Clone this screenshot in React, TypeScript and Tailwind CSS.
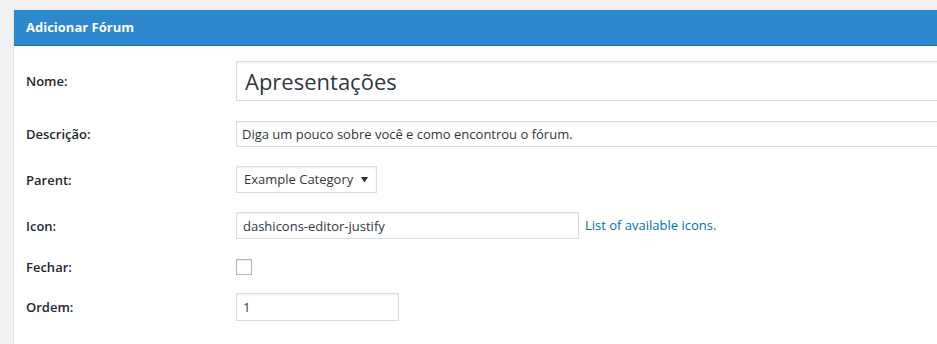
import React from 'react';

const font = { fontFamily: '"Open Sans", "Noto Sans", sans-serif' };

function Row({ label, top, children }: { label: string; top: string; children: React.ReactNode }) {
  return (
    <div className={`flex items-center ${top}`}>
      <div className="w-[222px] shrink-0 pl-3 text-[13px] leading-[16px] font-semibold text-[#23282d]">{label}</div>
      <div className="flex items-center flex-1 min-w-0">{children}</div>
    </div>
  );
}

const inputCls =
  'border border-[#ddd] bg-white shadow-[inset_0_1px_2px_rgba(0,0,0,0.07)] text-[#32373c] outline-none';

export default function App() {
  return (
    <div className="w-[937px] h-[344px] overflow-hidden bg-[#f1f1f1] pt-[10px] pl-[13px]" style={font}>
      <div className="w-[940px] h-[340px] bg-white border-l border-[#e5e5e5]">
        <div className="h-[36px] bg-[#2d88cd] border-b border-[#1f6cb0] flex items-center pl-3">
          <span className="text-[13px] font-bold text-white">Adicionar Fórum</span>
        </div>

        <Row label="Nome:" top="mt-[15px]">
          <input
            readOnly
            value="Apresentações"
            className={`${inputCls} w-full h-[40px] px-[8px] text-[22px]`}
          />
        </Row>

        <Row label="Descrição:" top="mt-[20px]">
          <input
            readOnly
            value="Diga um pouco sobre você e como encontrou o fórum."
            className={`${inputCls} w-full h-[26px] px-[5px] text-[13px]`}
          />
        </Row>

        <Row label="Parent:" top="mt-[19px]">
          <div className={`${inputCls} w-[141px] h-[27px] flex items-center justify-between pl-[7px] pr-[8px] text-[13px]`}>
            <span>Example Category</span>
            <svg width="7" height="7" viewBox="0 0 7 7">
              <path d="M0 1h7L3.5 6.5z" fill="#2c2c2c" />
            </svg>
          </div>
        </Row>

        <Row label="Icon:" top="mt-[19px]">
          <input
            readOnly
            value="dashicons-editor-justify"
            className={`${inputCls} w-[343px] h-[27px] px-[6px] text-[13px]`}
          />
          <a className="ml-[6px] text-[13px] text-[#0073aa]">List of available icons.</a>
        </Row>

        <Row label="Fechar:" top="mt-[20px]">
          <span className="w-[16px] h-[16px] border border-[#b4b9be] bg-white shadow-[inset_0_1px_2px_rgba(0,0,0,0.1)]" />
        </Row>

        <Row label="Ordem:" top="mt-[18px]">
          <input readOnly value="1" className={`${inputCls} w-[163px] h-[28px] px-[6px] text-[13px]`} />
        </Row>
      </div>
    </div>
  );
}
